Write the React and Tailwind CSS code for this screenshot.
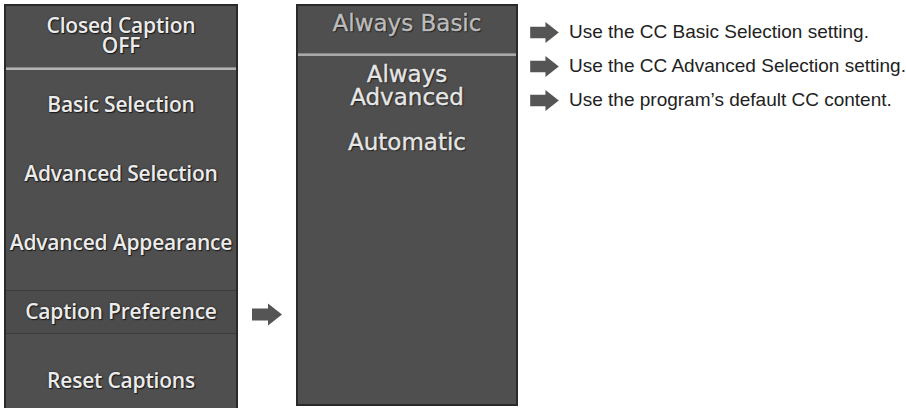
import React from "react";

const shadow = { textShadow: "1px 1px 1px #1a1a1a, 0 0 2px #222" };

function Arrow({ className }) {
  return (
    <svg viewBox="0 0 30 22" className={className}>
      <polygon points="0,5 16,5 16,0 30,11 16,22 16,17 0,17" fill="#555" />
    </svg>
  );
}

export default function App() {
  const rows = ["Basic Selection", "Advanced Selection", "Advanced Appearance"];
  return (
    <div className="w-[906px] h-[408px] bg-white flex overflow-hidden" style={{ fontFamily: "'Open Sans', sans-serif" }}>
      {/* left panel */}
      <div className="ml-[4px] mt-[4px] w-[234px] h-[420px] shrink-0 border-2 border-[#2a2a2a] bg-[#4f4f4f] flex flex-col text-[#ececec] font-semibold">
        <div className="h-[61px] pb-[3px] flex flex-col items-center justify-center text-[21px] leading-[20px] tracking-[-0.2px]" style={shadow}>
          <span>Closed Caption</span>
          <span>OFF</span>
        </div>
        <div className="h-[3px] bg-[#b4b4b4] border-t border-[#8a8a8a]" />
        {rows.map((r) => (
          <div key={r} className="h-[69px] flex items-center justify-center text-[21px] whitespace-nowrap tracking-[-0.2px]" style={shadow}>
            {r}
          </div>
        ))}
        <div className="h-[69px] flex items-center">
          <div className="w-full h-[44px] border-y border-[#3c3c3c] bg-[#4c4c4c] flex items-center justify-center text-[21px] tracking-[-0.2px]" style={shadow}>
            Caption Preference
          </div>
        </div>
        <div className="h-[69px] flex items-center justify-center text-[21px] tracking-[-0.2px]" style={shadow}>
          Reset Captions
        </div>
      </div>

      {/* middle arrow */}
      <div className="w-[58px] shrink-0 flex justify-center pt-[303px]">
        <Arrow className="w-[30px] h-[23px]" />
      </div>

      {/* middle panel */}
      <div className="mt-[4px] w-[222px] h-[402px] shrink-0 border-2 border-[#2a2a2a] bg-[#4f4f4f] flex flex-col items-stretch [-webkit-text-stroke:0.4px]" style={{ fontFamily: "'DejaVu Sans', sans-serif" }}>
        <div className="h-[47px] pt-[6px] flex justify-center text-[23px] leading-[23px] text-[#bcbcbc]" style={shadow}>
          Always Basic
        </div>
        <div className="h-[3px] bg-[#a8a8a8] border-t border-[#888]" />
        <div className="flex flex-col items-center text-[23px] leading-[23px] text-[#e6e6e6] mt-[7px]" style={shadow}>
          <span>Always</span>
          <span>Advanced</span>
          <span className="mt-[22px]">Automatic</span>
        </div>
      </div>

      {/* descriptions */}
      <div className="ml-[12px] pt-[21px] flex flex-col gap-[12px] text-[19px] text-[#222]" style={{ fontFamily: "'Liberation Sans', Arial, sans-serif" }}>
        {[
          "Use the CC Basic Selection setting.",
          "Use the CC Advanced Selection setting.",
          "Use the program’s default CC content.",
        ].map((t) => (
          <div key={t} className="flex items-center h-[22px] whitespace-nowrap">
            <Arrow className="w-[29px] h-[21px] shrink-0" />
            <span className="ml-[10px]">{t}</span>
          </div>
        ))}
      </div>
    </div>
  );
}
